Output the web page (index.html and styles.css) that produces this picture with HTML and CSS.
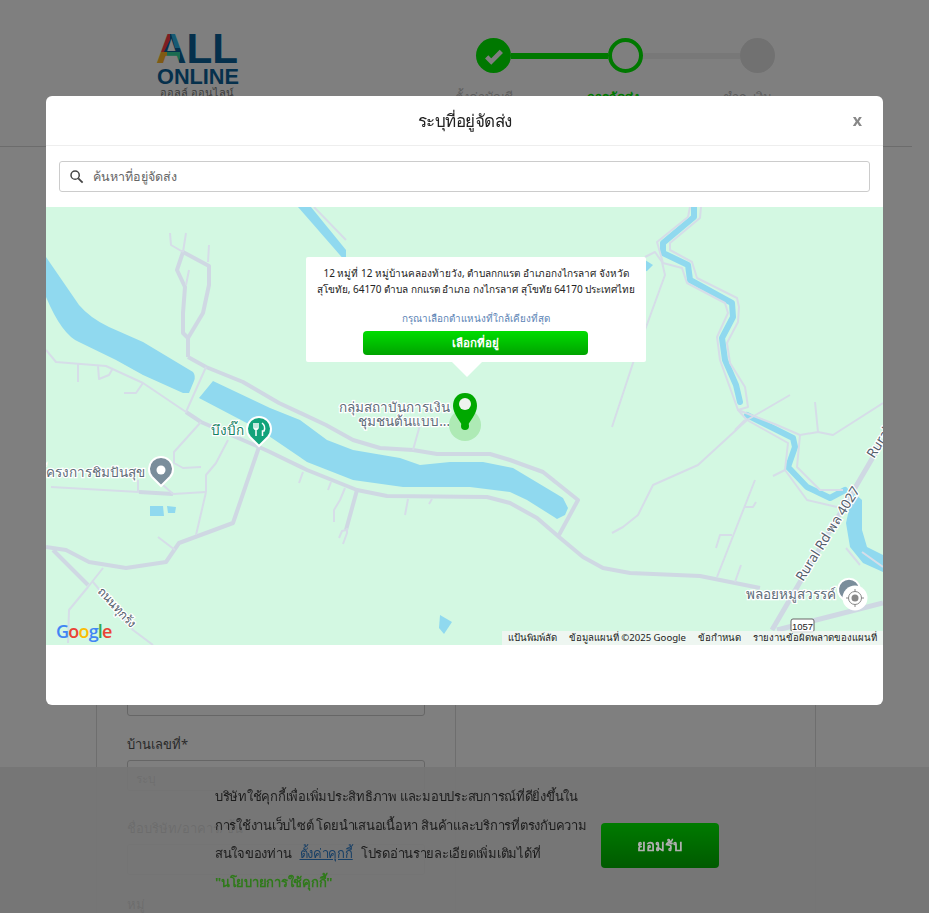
FILE: index.html
```html
<!DOCTYPE html>
<html lang="th">
<head>
<meta charset="utf-8">
<title>ระบุที่อยู่จัดส่ง</title>
<link rel="stylesheet" href="styles.css">
</head>
<body>
<div class="page">
  <header class="top">
    <div class="brand">
      <svg class="logo" viewBox="0 0 90 70" width="90" height="70">
        <defs>
          <pattern id="logoFill" patternUnits="userSpaceOnUse" x="0" y="0" width="90" height="70">
            <rect width="90" height="70" fill="#0a6098"/>
            <path d="M15 0H24L27 18H20Z" fill="#2fb4e8"/>
            <path d="M0 0H15V10L9 22H0Z" fill="#ff3a44"/>
            <path d="M0 22H14L12 36H0Z" fill="#ffb428"/>
            <path d="M12 22H25V28L22 36H12Z" fill="#34d6a0"/>
          </pattern>
        </defs>
        <text class="logo-all" x="1" y="33" fill="url(#logoFill)" textLength="82" lengthAdjust="spacingAndGlyphs">ALL</text>
        <text class="logo-online" x="2" y="54" fill="#0a6098" textLength="82" lengthAdjust="spacingAndGlyphs">ONLINE</text>
        <text class="logo-sub" x="5" y="67" fill="#777">ออลล์ ออนไลน์</text>
      </svg>
    </div>
    <div class="stepper">
      <div class="track">
        <span class="dot done"><svg viewBox="0 0 24 24" width="22" height="22"><path d="M4 13l5 5L20 7" fill="none" stroke="#fff" stroke-width="5"/></svg></span>
        <span class="bar on"></span>
        <span class="dot now"></span>
        <span class="bar"></span>
        <span class="dot"></span>
      </div>
      <div class="step-labels">
        <span class="step-label">ตั้งค่าบัญชี</span>
        <span class="step-label active">การจัดส่ง</span>
        <span class="step-label">ชำระเงิน</span>
      </div>
    </div>
  </header>
  <main class="panel">
    <section class="panel-left">
      <div class="field-input tall"></div>
      <label class="field-label">บ้านเลขที่*</label>
      <div class="field-input"><span class="hint">ระบุ</span></div>
      <label class="field-label under">ชื่อบริษัท/อาคาร/ชั้น</label>
      <div class="field-input"></div>
      <label class="field-label under-b">หมู่</label>
    </section>
    <section class="panel-right"></section>
  </main>
</div>

<div class="shade"></div>

<div class="cookie">
  <p class="cookie-text">บริษัทใช้คุกกี้เพื่อเพิ่มประสิทธิภาพ และมอบประสบการณ์ที่ดียิ่งขึ้นใน<br>การใช้งานเว็บไซต์ โดยนำเสนอเนื้อหา สินค้าและบริการที่ตรงกับความ<br>สนใจของท่าน <a class="cookie-link">ตั้งค่าคุกกี้</a> โปรดอ่านรายละเอียดเพิ่มเติมได้ที่<br><b class="cookie-policy">"นโยบายการใช้คุกกี้"</b></p>
  <button class="cookie-btn">ยอมรับ</button>
</div>

<div class="modal">
  <div class="modal-head">
    <h2 class="modal-title">ระบุที่อยู่จัดส่ง</h2>
    <span class="modal-close">x</span>
  </div>
  <div class="modal-search">
    <div class="search-box">
      <svg viewBox="0 0 24 24" width="18" height="18"><circle cx="9.500" cy="9.500" r="5.500" fill="none" stroke="#444" stroke-width="2"/><path d="M13.700 13.700 19.500 19.500" stroke="#444" stroke-width="2.400"/></svg>
      <span class="search-ph">ค้นหาที่อยู่จัดส่ง</span>
    </div>
  </div>
  <div class="map">
    <svg class="map-svg" viewBox="46 207 837 438" width="837" height="438">
      <rect x="46" y="207" width="837" height="438" fill="#d3f8e2"/>
      <g fill="#90d9ef">
        <path d="M46 257 79 305Q90 318 109 327L143 342 193 372Q196 376 194 381L189 393 183 393 143 375 116 360 79 342Q62 335 46 297Z"/>
        <path d="M199 398 213 381 270 408 300 420 327 440 353 450 400 458 420 465 450 462 483 462 513 468 563 498 568 508 565 515 557 519 527 500 510 492 470 487 403 487 353 480 307 462 260 430Z"/>
        <path d="M298 207 311 207 346 250 346 262Z"/>
        <path d="M645 260 653 265 647 271 640 272Z"/>
        <path d="M853 492 862 500 862 530 867 547 883 555 883 572 863 563 850 547 846 523Z"/>
        <path d="M440 615 452 622 444 634 439 628Z"/>
        <path d="M150 506 163 506 164 516 150 516Z"/>
        <path d="M167 506 176 507 175 513 168 513Z"/>
      </g>
      <path class="riv" d="M694 207V217L663 243V253L688 265 690 280 732 303 733 317 722 338 725 360 736 385 740 402"/>
      <path class="riv" d="M747 415 777 430 793 438 795 447 788 467 807 487 830 498 845 490"/>
      <g class="road-thick">
        <path d="M188 357V338L183 333V313L185 287 177 270 183 252 209 266V285L203 313 188 338M188 357 206 367 243 382 279 403 326 425 353 440 380 448 413 450 437 454 490 454 510 460 543 472 578 500 559 535"/>
        <path d="M259 447 233 523 179 543 166 562 126 568 89 562 66 550 46 547M53 550 88 585"/>
        <path d="M186 412 201 422 259 447 270 452 307 470 357 490 387 496 487 497 510 503 537 518 559 537 583 557 603 568 630 573 700 576 760 588"/>
        <path d="M139 492 173 494M357 490 346 530"/>
        <path class="road-wide" d="M883 440 772 630M777 630 883 603"/>
      </g>
      <g class="road-thin">
        <path d="M183 252 171 245 170 233M183 252 186 233M208 262 209 245M189 270 186 285"/>
        <path d="M46 350 56 362 106 366 143 383 186 412 206 367M78 363V382M98 366 99 379 109 375 113 368M143 383 136 393 124 393"/>
        <path d="M51 487 139 492M173 494 206 492M163 485 173 494M138 492V480"/>
        <path d="M206 492V475L216 463 228 440M206 492 196 535"/>
        <path d="M201 422 174 452V463L183 468 201 467"/>
        <path d="M88 587 103 568M88 587 69 610 68 643M93 582 133 630 153 645"/>
        <path d="M158 537 175 550"/>
        <path d="M303 472 299 483M331 482 328 490M345 488 340 500 334 510V522M346 530 342 531 339 538M347 528V533L343 544M408 499 405 515M432 499 429 504M413 450 420 425"/>
        <path d="M612 533 623 527 638 515 653 485 698 465 747 420 790 395M755 480 717 577M745 507H753L756 502M732 535H720L716 548M741 565 735 582"/>
        <path d="M612 427 633 363 665 275 662 262 655 252 645 257"/>
        <path d="M690 207 688 217 657 242 663 263 682 268 687 283 725 303 728 313 717 337 720 360 738 410 747 420 788 443 785 470 807 500 837 507"/>
        <path d="M701 207 700 218 670 243V250L692 262 697 278 737 298 739 307 738 322 727 343 730 363 745 387 748 407 738 410 777 425 800 435 797 467 820 490 843 490"/>
        <path d="M773 476 785 470M815 402 818 432M800 435 818 432 833 435 883 403M735 430 745 420"/>
        <path d="M314 207 346 240M862 552 883 567M846 548 860 565"/>
      </g>
      <g class="map-label">
        <text x="450" y="412" text-anchor="end">กลุ่มสถาบันการเงิน</text>
        <text x="450" y="426" text-anchor="end">ชุมชนต้นแบบ...</text>
        <text x="145" y="477" text-anchor="end">โครงการชิมปันสุข</text>
        <text x="836" y="599" text-anchor="end">พลอยหมูสวรรค์</text>
      </g>
      <text class="map-label-g" x="244" y="435" text-anchor="end">บึงบิ๊ก</text>
      <g class="map-label">
        <text class="road-name" transform="translate(97 592) rotate(47)">ถนนทุกรัง</text>
        <text class="road-name wide" transform="translate(803 582) rotate(-58)">Rural Rd พล 4027</text>
        <text class="road-name wide" transform="translate(874 459) rotate(-58)">Rural</text>
      </g>
      <g>
        <rect x="791" y="619" width="23" height="13" rx="2" fill="#fff" stroke="#666"/>
        <text class="shield" x="802.500" y="630" text-anchor="middle">1057</text>
      </g>
      <circle cx="465" cy="425" r="16" fill="#aeeab5"/>
      <path d="M465 393C457 393 453 399 453 406 453 414 461 422 465 430 469 422 477 414 477 406 477 399 473 393 465 393Z" fill="#00a800"/>
      <circle cx="465" cy="404" r="6" fill="#eef3ee"/>
      <circle cx="465" cy="426" r="4" fill="#00a800"/>
      <path d="M259 446 250 437A12 12 0 1 1 268 437Z" fill="#12a37a" stroke="#fff" stroke-width="2"/>
      <path d="M256 423V436M254 423V428Q256 431 258 428V423M262 423Q266 426 264 431H262.500V436" fill="none" stroke="#fff" stroke-width="1.500"/>
      <path d="M161 486 152 477A12 12 0 1 1 170 477Z" fill="#7a8d9b" stroke="#fff" stroke-width="2"/>
      <circle cx="161" cy="470" r="4.500" fill="#fff"/>
      <path d="M848 604 840 596A11 11 0 1 1 858 596Z" fill="#7a8d9b" stroke="#fff" stroke-width="2"/>
      <circle cx="855" cy="598" r="12.500" fill="#fff"/>
      <circle cx="855" cy="598" r="3.500" fill="#888"/>
      <circle cx="855" cy="598" r="6.500" fill="none" stroke="#888"/>
      <path d="M855 589V592M855 604V607M846 598H849M861 598H864" stroke="#888"/>
    </svg>
    <div class="google"><span class="gb">G</span><span class="gr">o</span><span class="gy">o</span><span class="gb">g</span><span class="gg">l</span><span class="gr">e</span></div>
    <div class="attrib">
      <span class="attrib-item">แป้นพิมพ์ลัด</span>
      <span class="attrib-item">ข้อมูลแผนที่ ©2025 Google</span>
      <span class="attrib-item">ข้อกำหนด</span>
      <span class="attrib-item">รายงานข้อผิดพลาดของแผนที่</span>
    </div>
    <div class="popup">
      <p class="popup-text">12 หมู่ที่ 12 หมู่บ้านคลองท้ายวัง, ตำบลกกแรต อำเภอกงไกรลาศ จังหวัด<br>สุโขทัย, 64170 ตำบล กกแรต อำเภอ กงไกรลาศ สุโขทัย 64170 ประเทศไทย</p>
      <p class="popup-link">กรุณาเลือกตำแหน่งที่ใกล้เคียงที่สุด</p>
      <button class="popup-btn">เลือกที่อยู่</button>
    </div>
  </div>
</div>
</body>
</html>
```

FILE: styles.css
```css
* { box-sizing: border-box; }
html, body { margin: 0; height: 100%; overflow: hidden; }
body { font-family: "Noto Sans", "Liberation Sans", sans-serif; background: #fff; color: #333; }
.page { width: 912px; }
.top { height: 147px; border-bottom: 1px solid #d8d8d8; display: flex; padding: 30px 0 0 155px; }
.brand { width: 303px; }
.logo { display: block; }
.logo-all { font: 700 43px "Liberation Sans", sans-serif; }
.logo-online { font: 700 22px "Liberation Sans", sans-serif; }
.logo-sub { font: 400 11px "Noto Sans", sans-serif; }
.stepper { width: 340px; margin-left: 18px; padding-top: 8px; }
.track { display: flex; align-items: center; width: 299px; }
.dot { width: 35px; height: 35px; border-radius: 50%; background: #e2e2e2; flex: none; display: flex; align-items: center; justify-content: center; }
.dot.done { background: #00f000; }
.dot.now { background: #fff; border: 4px solid #00f000; }
.bar { height: 6px; flex: 1; background: #f0f0f0; }
.bar.on { background: #00f000; }
.step-labels { display: grid; grid-template-columns: 132px 136px auto; margin: 14px 0 0 -21px; }
.step-label { font-size: 13px; color: #bbb; white-space: nowrap; }
.step-label.active { color: #00f000; font-weight: 700; }
.panel { margin: 0 0 0 96px; width: 720px; height: 800px; display: flex; border: 1px solid #ddd; }
.panel-left { width: 359px; border-right: 1px solid #ddd; padding: 546px 30px 0; flex: none; }
.field-input { height: 31px; border: 1px solid #ccc; border-radius: 3px; padding: 5px 8px; }
.field-input.tall { height: 22px; }
.field-label { display: block; font-size: 13px; line-height: 18px; margin: 19px 0 7px; color: #555; }
.field-label.under { margin: 28px 0 7px; color: #333; }
.field-label.under-b { margin: 20px 0 0; color: #333; }
.hint { color: #555; font-size: 12px; }

.shade { position: fixed; inset: 0; background: rgba(0, 0, 0, .5); }

.cookie { position: fixed; left: 0; right: 0; bottom: 0; height: 146px; background: rgba(118, 118, 118, .9); display: flex; align-items: flex-start; padding: 15px 0 0 215px; }
.cookie-text { margin: 0; width: 386px; font-size: 13px; letter-spacing: -.26px; line-height: 28.500px; color: #1c1c1c; white-space: nowrap; }
.cookie-link { color: #173f66; text-decoration: underline; margin: 0 5px; }
.cookie-policy { color: #2f7a1a; }
.cookie-btn { margin: 41px 0 0 0; width: 118px; height: 45px; border: 0; border-radius: 4px; background: linear-gradient(#007a00, #005a00); color: #b0b0b0; font: 700 15px "Noto Sans", sans-serif; }

.modal { position: fixed; left: 46px; top: 96px; width: 837px; height: 609px; background: #fff; border-radius: 6px; overflow: hidden; }
.modal-head { height: 50px; border-bottom: 1px solid #eee; display: flex; align-items: center; justify-content: center; position: relative; }
.modal-title { margin: 0; font-size: 17px; letter-spacing: -.5px; font-weight: 500; color: #222; }
.modal-close { position: absolute; right: 21px; top: 13px; font-size: 16px; font-weight: 700; color: #888; }
.modal-search { padding: 15px 13px; height: 61px; }
.search-box { height: 31px; border: 1px solid #ccc; border-radius: 3px; display: flex; align-items: center; padding-left: 8px; gap: 7px; }
.search-ph { font-size: 12.500px; color: #666; }
.map { position: relative; height: 438px; overflow: hidden; }
.map-svg { display: block; }
.riv { fill: none; stroke: #90d9ef; stroke-width: 6; stroke-linecap: round; stroke-linejoin: round; }
.road-thick { fill: none; stroke: #cfd8e3; stroke-width: 4; stroke-linejoin: round; }
.road-thick .road-wide { stroke-width: 5; }
.road-thin { fill: none; stroke: #d6dde8; stroke-width: 2; stroke-linejoin: round; }
.map-label text, .map-label-g { font: 13.500px "Noto Sans", sans-serif; fill: #5e6c78; paint-order: stroke; stroke: #fff; stroke-width: 2.500px; }
.map-label-g { fill: #12805f; }
.map-label .road-name { font-size: 12px; fill: #55606c; }
.map-label .road-name.wide { font-size: 13.500px; }
.shield { font: 9.500px "Liberation Sans", sans-serif; fill: #222; }
.google { position: absolute; left: 10px; bottom: 2px; font: 600 18px "Open Sans", sans-serif; letter-spacing: -.8px; }
.gb { color: #4285f4; } .gr { color: #ea4335; } .gy { color: #fbbc05; } .gg { color: #34a853; }
.attrib { position: absolute; right: 0; bottom: 0; height: 14px; display: flex; gap: 0; }
.attrib-item { background: rgba(245, 245, 245, .8); font-size: 9.600px; line-height: 14px; padding: 0 6px; color: #222; white-space: nowrap; }
.popup { position: absolute; left: 260px; top: 50px; width: 340px; height: 105px; background: #fff; border-radius: 2px; padding: 8px 0 0; text-align: center; }
.popup::after { content: ""; position: absolute; left: 146px; top: 105px; border: 15px solid transparent; border-top-color: #fff; border-bottom: 0; }
.popup-text { margin: 0; font-size: 10px; line-height: 16px; color: #222; white-space: nowrap; }
.popup-link { margin: 14px 0 5px; font-size: 9.900px; line-height: 15px; color: #5a83b5; }
.popup-btn { display: block; width: 225px; height: 24px; margin: 0 0 0 57px; padding: 0; border: 0; border-radius: 4px; background: linear-gradient(#00dd00, #00a300); color: #fff; font: 700 11.500px "Noto Sans", sans-serif; }
```
